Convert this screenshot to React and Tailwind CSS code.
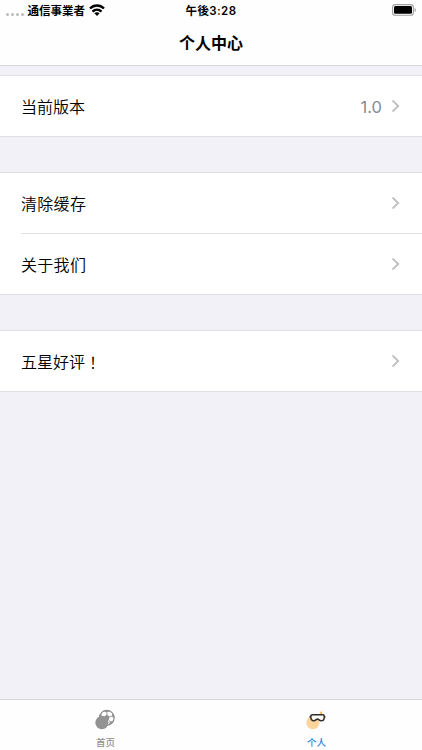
const SECTIONS = [
  [{ label: '当前版本', value: '1.0' }],
  [
    { label: '清除缓存', className: 'tracking-[0.3px]' },
    { label: '关于我们', className: 'tracking-[0.3px]' },
  ],
  [{ label: '五星好评', mark: '！' }],
]

function WifiIcon() {
  return (
    <svg viewBox="0 0 16 12" className="h-3 w-4" fill="none" stroke="#000" strokeWidth="2.4">
      <path d="M1 4.5C5 .4 11 .4 15 4.5" />
      <path d="M3.5 7.6C6.2 5 9.8 5 12.5 7.6" />
      <path d="M5.4 9.3C7 7.9 9 7.9 10.6 9.3L8 11.9Z" fill="#000" stroke="none" />
    </svg>
  )
}

function BatteryIcon() {
  return (
    <svg viewBox="0 0 25 12" className="h-3 w-[25px]">
      <rect x=".6" y=".6" width="20.8" height="10.6" rx="2.8" fill="#fff" stroke="#a0a0a0" strokeWidth="1.1" />
      <rect x="2" y="2" width="18" height="7.8" rx="1.5" fill="#000" />
      <path d="M22.6 4v4c1.8-.7 1.8-3.3 0-4Z" fill="#a0a0a0" />
    </svg>
  )
}

function Chevron() {
  return (
    <svg viewBox="0 0 8 14" className="h-3.5 w-2" fill="none" stroke="#c0c0c3" strokeWidth="1.9">
      <path d="M.5 1.5 6.2 7 .5 12.5" />
    </svg>
  )
}

function BallIcon() {
  return (
    <svg viewBox="0 0 22 22" className="h-[22px] w-[22px]">
      <circle cx="12.8" cy="8.8" r="7.4" fill="#fff" stroke="#8e8e8e" strokeWidth="1.2" />
      <g fill="#929292">
        <path d="m12.9 5.6 2.9 2.1-1.1 3.4h-3.6L10 7.7Z" />
        <path d="m9.6 2.3 3.2 1.2 3.3-1.2-3.3-.9Z" />
        <path d="m18 4.1.1 3.2 2 2.2-.2-3Z" />
        <path d="m7.6 4.1-.1 3.3-2 2.1.2-3Z" />
        <path d="m19 11.7-3 .9-1.3 2.8 3-1.5Z" />
      </g>
      <path
        d="M12.9 3.4v2.4m2.8 2 2.5-.8m-3.5 4 1.4 1.8M10 7.8 7.5 7m3.6 4-1.5 2"
        fill="none"
        stroke="#929292"
        strokeWidth=".9"
      />
      <circle cx="7.9" cy="13.6" r="6.6" fill="#929292" />
    </svg>
  )
}

function GogglesIcon() {
  return (
    <svg viewBox="0 0 22 22" className="h-[22px] w-[22px]">
      <circle cx="7.9" cy="13.6" r="6.6" fill="#fcd49d" />
      <path d="M15.2 2.6h1.9v3h-1.9Z" fill="#f5b64f" />
      <path
        d="M7.4 5.8h10.4c1 0 1.5.6 1.5 1.9 0 2.6-1.1 4.1-3.1 4.1-2.1 0-2.1-1.7-3.7-1.7s-1.6 1.7-3.6 1.7c-2.1 0-3.1-1.5-3.1-4 0-1.3.4-2 1.6-2Z"
        fill="#fffdf9"
        stroke="#302d29"
        strokeWidth="1.5"
      />
      <path d="M4.3 7.8h1.3M19.3 7.8h1.2" stroke="#302d29" strokeWidth="1.3" />
    </svg>
  )
}

function Row({ row }) {
  return (
    <div className="flex h-[60px] items-center bg-white pl-[21px]">
      <span className={`flex pt-0.5 text-base leading-6 font-[350] text-black ${row.className ?? ''}`}>
        {row.label}
        {row.mark && (
          <span className="font-['Noto_Sans_CJK_TC',sans-serif]" lang="zh-TW">
            {row.mark}
          </span>
        )}
      </span>
      <div className="ml-auto flex items-center pr-[22px]">
        {row.value && (
          <span className="mr-2.5 pt-0.5 font-['Inter'] text-[16.5px] text-[#8a8a8e]">{row.value}</span>
        )}
        <Chevron />
      </div>
    </div>
  )
}

function Section({ rows }) {
  return (
    <section className="border-y border-[#e0dfe5] bg-white">
      {rows.map((row, i) => (
        <div key={row.label}>
          {i > 0 && <div className="ml-[21px] h-px bg-[#e0e0e2]" />}
          <Row row={row} />
        </div>
      ))}
    </section>
  )
}

export default function App() {
  return (
    <div className="flex h-[750px] w-[422px] flex-col overflow-hidden bg-[#f2f1f7] font-['Inter','Noto_Sans_CJK_SC',sans-serif]">
      <header className="flex h-[66px] shrink-0 flex-col border-b border-[#d8d8db] bg-[#fefefe]">
        <div className="grid h-5 grid-cols-3 items-center text-[11.5px] font-semibold text-black">
          <div className="flex items-center pl-1.5">
            <span className="mt-2 flex gap-[2px]">
              {[0, 1, 2, 3].map((dot) => (
                <i key={dot} className="size-[3px] rounded-full bg-[#bcbcbc]" />
              ))}
            </span>
            <span className="mr-1 ml-[3.5px] font-['Noto_Sans_CJK_JP',sans-serif] leading-5 font-bold">
              通信事業者
            </span>
            <WifiIcon />
          </div>
          <div className="pt-0.5 text-center font-['Inter','Noto_Sans_CJK_JP',sans-serif] leading-[18px] tracking-[0.4px]">
            午後3:28
          </div>
          <div className="flex justify-end pr-[5px]">
            <BatteryIcon />
          </div>
        </div>
        <h1 className="text-center text-base leading-[46px] font-bold text-black">个人中心</h1>
      </header>

      <main className="flex flex-1 flex-col gap-[35px] pt-[9px]">
        {SECTIONS.map((rows) => (
          <Section key={rows[0].label} rows={rows} />
        ))}
      </main>

      <nav className="grid h-[51px] shrink-0 grid-cols-2 border-t border-[#d5d5d8] bg-[#fefefe] text-[9.5px] leading-3 font-medium">
        <div className="flex flex-col items-center pt-[9px] text-[#929292]">
          <span className="pr-0.5">
            <BallIcon />
          </span>
          <span className="mt-[5.5px]">首页</span>
        </div>
        <div className="flex flex-col items-center pt-[9px] text-[#1581e8]">
          <span className="pr-0.5">
            <GogglesIcon />
          </span>
          <span className="mt-[5.5px]">个人</span>
        </div>
      </nav>
    </div>
  )
}
